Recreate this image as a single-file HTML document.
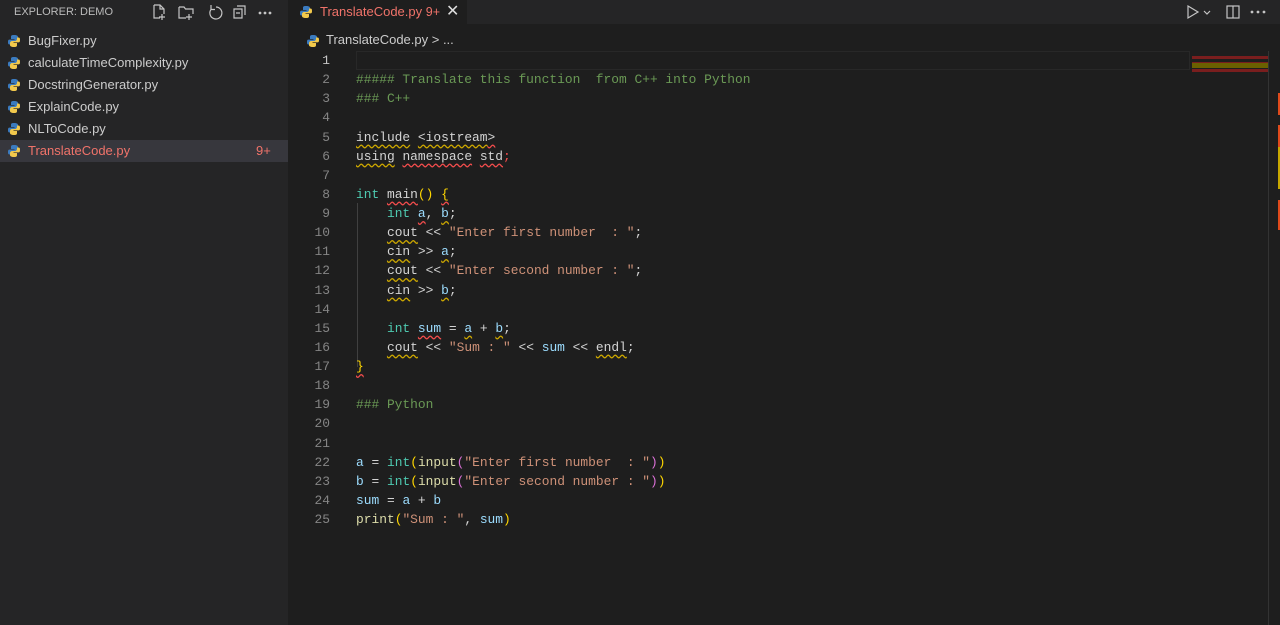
<!DOCTYPE html><html><head><meta charset="utf-8"><style>
*{margin:0;padding:0;box-sizing:border-box}
body{width:1280px;height:625px;background:#1e1e1e;overflow:hidden;font-family:"Liberation Sans",sans-serif;position:relative}
#side{position:absolute;left:0;top:0;width:288px;height:625px;background:#252526}
#side .hdr{height:24px;color:#bbb;font-size:11px;padding:6px 0 0 14px}
.row{position:absolute;left:0;width:288px;height:22px;color:#ccc;font-size:13px;line-height:22px;padding-left:28px}
.row.sel{background:#37373d;color:#f0736a}
.py{position:absolute;width:14px;height:14px}
#tabs{position:absolute;left:288px;top:0;width:992px;height:24px;background:#252526}
#tab{position:absolute;left:288px;top:0;width:179px;height:24px;background:#1e1e1e;color:#f0736a;font-size:13px;line-height:24px;padding-left:32px}
#crumb{position:absolute;left:326px;top:32px;color:#ccc;font-size:13px}
.code{position:absolute;left:0;top:51px;font-family:"Liberation Mono",monospace;font-size:12.9px;line-height:19.125px;white-space:pre}
.ln{position:absolute;left:290px;width:40px;text-align:right;color:#858585}
.tx{position:absolute;left:356px;top:0;color:#d4d4d4}
.c{color:#6a9955}.k{color:#4ec9b0}.s{color:#ce9178}.v{color:#9cdcfe}.f{color:#dcdcaa}.y{color:#ffd700}.p{color:#da70d6}
.wy{text-decoration:underline wavy #cca700;text-underline-offset:3px}
.wr{text-decoration:underline wavy #f14c4c;text-underline-offset:3px}
</style></head><body>
<div id="side"><div class="hdr">EXPLORER: DEMO</div>
<svg style="position:absolute;left:150px;top:3px" width="125" height="18" fill="none" stroke="#c5c5c5" stroke-width="1.2">
<path d="M4 2h6l4 4v5M4 2v13h6M10 2v4h4M12 11v6M9 14h6"/>
<path d="M29 4h5l1.5 2H43v5M29 4v11h7M39 11v6M36 14h6"/>
<path d="M66 4a6 6 0 1 1-5 2.5M61 2v4.5h4"/>
<path d="M84 6h8v9h-8zM87 3h8v9M86 10h4"/>
<circle cx="110" cy="10" r=".8" fill="#c5c5c5"/><circle cx="115" cy="10" r=".8" fill="#c5c5c5"/><circle cx="120" cy="10" r=".8" fill="#c5c5c5"/>
</svg>
</div>
<div class="row" style="top:30px">BugFixer.py</div>
<div class="row" style="top:52px">calculateTimeComplexity.py</div>
<div class="row" style="top:74px">DocstringGenerator.py</div>
<div class="row" style="top:96px">ExplainCode.py</div>
<div class="row" style="top:118px">NLToCode.py</div>
<div class="row sel" style="top:140px">TranslateCode.py<span style="position:absolute;left:256px">9+</span></div>
<svg width="0" height="0" style="position:absolute"><defs><g id="pyi"><path d="M7 1C4 1 4 2 4 3v2h3.5v.6H2.5C1 5.6 1 7 1 8s0 2.5 1.5 2.5H4V9c0-1 1-2 2-2h3c1 0 2-1 2-2V3c0-1-1-2-4-2z" fill="#3b7bbf"/><path d="M7 13c3 0 3-1 3-2V9H6.5v-.6h5c1.5 0 1.5-1.4 1.5-2.4s0-2.5-1.5-2.5H10V5c0 1-1 2-2 2H5C4 7 3 8 3 9v2c0 1 1 2 4 2z" fill="#f2c94c"/></g></defs></svg>
<svg class="py" style="left:7px;top:34px" viewBox="0 0 14 14"><use href="#pyi"/></svg>
<svg class="py" style="left:7px;top:56px" viewBox="0 0 14 14"><use href="#pyi"/></svg>
<svg class="py" style="left:7px;top:78px" viewBox="0 0 14 14"><use href="#pyi"/></svg>
<svg class="py" style="left:7px;top:100px" viewBox="0 0 14 14"><use href="#pyi"/></svg>
<svg class="py" style="left:7px;top:122px" viewBox="0 0 14 14"><use href="#pyi"/></svg>
<svg class="py" style="left:7px;top:144px" viewBox="0 0 14 14"><use href="#pyi"/></svg>
<div id="tabs"></div>
<div id="tab">TranslateCode.py <span style="font-size:12.5px">9+</span><span style="position:absolute;left:158px;color:#ddd;font-size:16px">✕</span></div>
<svg class="py" style="left:299px;top:5px" viewBox="0 0 14 14"><use href="#pyi"/></svg>
<svg style="position:absolute;left:1184px;top:3px" width="96" height="18" fill="none" stroke="#c5c5c5" stroke-width="1.2">
<path d="M4 3l10 6-10 6z"/><path d="M20 8l3 3 3-3"/>
<rect x="43" y="3" width="12" height="12"/><path d="M49 3v12"/>
<circle cx="68" cy="9" r=".8" fill="#c5c5c5"/><circle cx="74" cy="9" r=".8" fill="#c5c5c5"/><circle cx="80" cy="9" r=".8" fill="#c5c5c5"/></svg>
<svg class="py" style="left:306px;top:34px" viewBox="0 0 14 14"><use href="#pyi"/></svg>
<div id="crumb">TranslateCode.py &gt; ...</div>
<div style="position:absolute;left:356px;top:51px;width:834px;height:19px;border:1px solid #282828"></div>
<div style="position:absolute;left:357px;top:203px;width:1px;height:164px;background:#404040"></div>
<div style="position:absolute;left:1192px;top:51px;width:76px;height:34px;background:#1e1e1e">
<div style="position:absolute;left:0;top:5px;width:76px;height:3px;background:#7a1e1e"></div>
<div style="position:absolute;left:0;top:11px;width:76px;height:5px;background:#7a1e1e"></div>
<div style="position:absolute;left:0;top:12px;width:76px;height:5px;background:#6b6000"></div>
<div style="position:absolute;left:0;top:18px;width:76px;height:3px;background:#7a1e1e"></div></div>
<div style="position:absolute;left:1268px;top:51px;width:1px;height:574px;background:#333"></div>
<div style="position:absolute;left:1278px;top:93px;width:2px;height:22px;background:#e04a1b"></div>
<div style="position:absolute;left:1278px;top:125px;width:2px;height:22px;background:#e04a1b"></div>
<div style="position:absolute;left:1278px;top:147px;width:2px;height:42px;background:#c8a800"></div>
<div style="position:absolute;left:1278px;top:200px;width:2px;height:30px;background:#e04a1b"></div>
<div class="code"><div class="ln" style="top:0;color:#c6c6c6">1</div><div class="ln" style="top:19.125px">2</div><div class="ln" style="top:38.25px">3</div><div class="ln" style="top:57.375px">4</div><div class="ln" style="top:76.5px">5</div><div class="ln" style="top:95.625px">6</div><div class="ln" style="top:114.75px">7</div><div class="ln" style="top:133.875px">8</div><div class="ln" style="top:153px">9</div><div class="ln" style="top:172.125px">10</div><div class="ln" style="top:191.25px">11</div><div class="ln" style="top:210.375px">12</div><div class="ln" style="top:229.5px">13</div><div class="ln" style="top:248.625px">14</div><div class="ln" style="top:267.75px">15</div><div class="ln" style="top:286.875px">16</div><div class="ln" style="top:306px">17</div><div class="ln" style="top:325.125px">18</div><div class="ln" style="top:344.25px">19</div><div class="ln" style="top:363.375px">20</div><div class="ln" style="top:382.5px">21</div><div class="ln" style="top:401.625px">22</div><div class="ln" style="top:420.75px">23</div><div class="ln" style="top:439.875px">24</div><div class="ln" style="top:459px">25</div><div class="tx"> 
<span class="c">##### Translate this function  from C++ into Python</span>
<span class="c">### C++</span>

<span class="wy">include</span> <span class="wy">&lt;iostream</span><span class="wr">&gt;</span>
<span class="wy">using</span> <span class="wr">namespace</span> <span class="wr">std</span><span style="color:#f14c4c">;</span>

<span class="k">int</span> <span class="wr">main</span><span class="y">()</span> <span class="y wr">{</span>
    <span class="k">int</span> <span class="v wr">a</span>, <span class="v wy">b</span>;
    <span class="wy">cout</span> &lt;&lt; <span class="s">"Enter first number  : "</span>;
    <span class="wy">cin</span> &gt;&gt; <span class="v wy">a</span>;
    <span class="wy">cout</span> &lt;&lt; <span class="s">"Enter second number : "</span>;
    <span class="wy">cin</span> &gt;&gt; <span class="v wy">b</span>;

    <span class="k">int</span> <span class="v wr">sum</span> = <span class="v wy">a</span> + <span class="v wy">b</span>;
    <span class="wy">cout</span> &lt;&lt; <span class="s">"Sum : "</span> &lt;&lt; <span class="v">sum</span> &lt;&lt; <span class="wy">endl</span>;
<span class="y wr">}</span>

<span class="c">### Python</span>


<span class="v">a</span> = <span class="k">int</span><span class="y">(</span><span class="f">input</span><span class="p">(</span><span class="s">"Enter first number  : "</span><span class="p">)</span><span class="y">)</span>
<span class="v">b</span> = <span class="k">int</span><span class="y">(</span><span class="f">input</span><span class="p">(</span><span class="s">"Enter second number : "</span><span class="p">)</span><span class="y">)</span>
<span class="v">sum</span> = <span class="v">a</span> + <span class="v">b</span>
<span class="f">print</span><span class="y">(</span><span class="s">"Sum : "</span>, <span class="v">sum</span><span class="y">)</span></div></div>
</body></html>
